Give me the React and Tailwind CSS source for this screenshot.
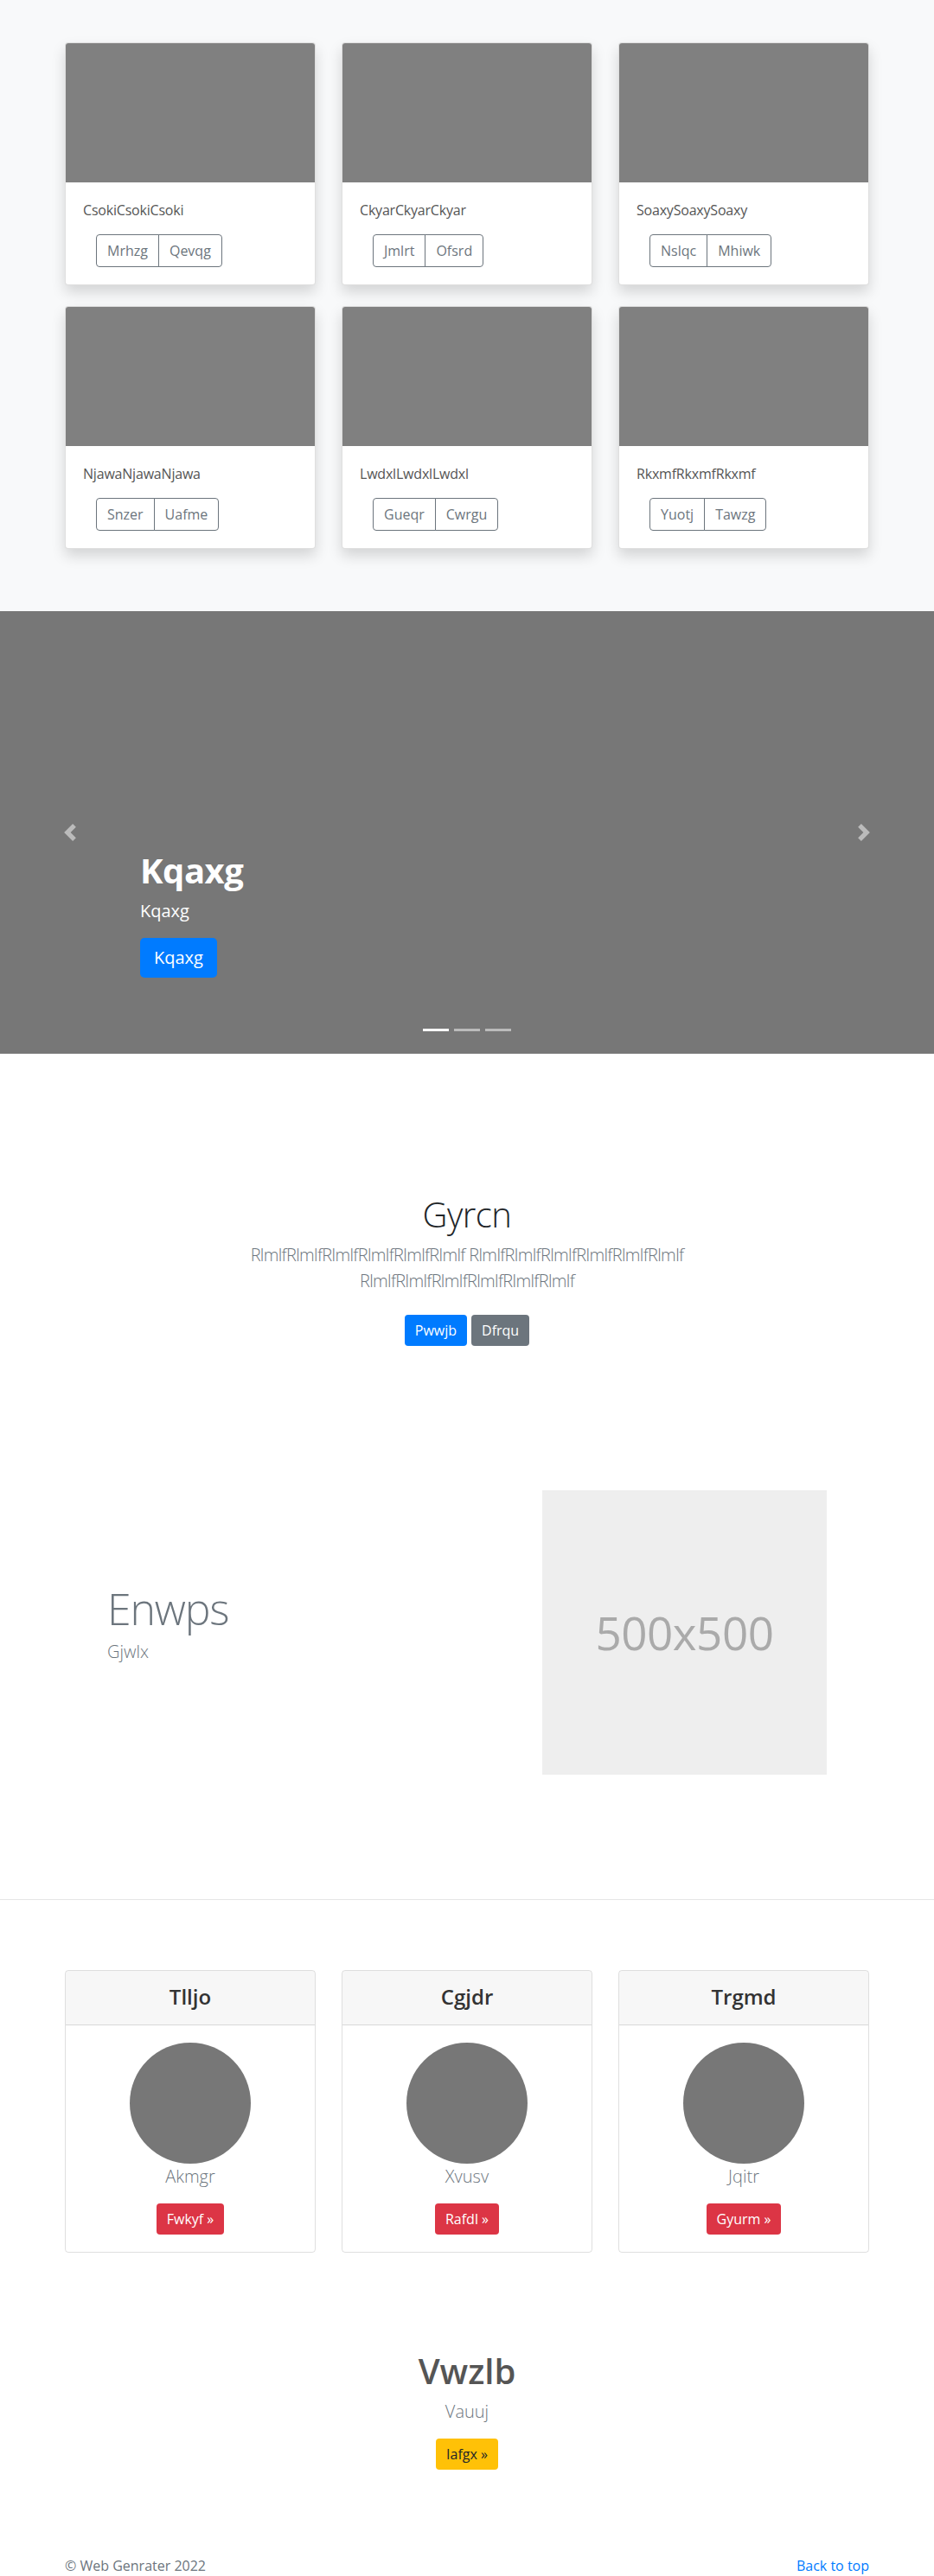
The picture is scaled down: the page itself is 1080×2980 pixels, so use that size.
import React from "react";

const albums = [
  ["CsokiCsokiCsoki", "Mrhzg", "Qevqg"],
  ["CkyarCkyarCkyar", "Jmlrt", "Ofsrd"],
  ["SoaxySoaxySoaxy", "Nslqc", "Mhiwk"],
  ["NjawaNjawaNjawa", "Snzer", "Uafme"],
  ["LwdxlLwdxlLwdxl", "Gueqr", "Cwrgu"],
  ["RkxmfRkxmfRkxmf", "Yuotj", "Tawzg"],
];

const pricing = [
  ["Tlljo", "Akmgr", "Fwkyf »"],
  ["Cgjdr", "Xvusv", "Rafdl »"],
  ["Trgmd", "Jqitr", "Gyurm »"],
];

function AlbumCard({ text, a, b }) {
  return (
    <div className="bg-white border border-black/[.125] rounded-[4px] overflow-hidden shadow-[0_8px_16px_rgba(0,0,0,0.15)]">
      <div className="h-[161px] bg-[#808080]" />
      <div className="p-5">
        <p className="text-base leading-6 mb-4 text-[#555] tracking-[-0.2px]">{text}</p>
        <div className="flex">
          <div className="ml-[15px] inline-flex">
            <span className="px-3 py-1.5 text-base leading-6 text-[#6c757d] border border-[#6c757d] rounded-l-[4px]">
              {a}
            </span>
            <span className="-ml-px px-3 py-1.5 text-base leading-6 text-[#6c757d] border border-[#6c757d] rounded-r-[4px]">
              {b}
            </span>
          </div>
        </div>
      </div>
    </div>
  );
}

export default function App() {
  return (
    <div className="font-['Open_Sans','Noto_Sans',sans-serif] text-[#212529] bg-white">
      {/* Album */}
      <section className="bg-[#f8f9fa] pt-[49px] pb-[72px]">
        <div className="mx-auto w-[960px] px-[15px]">
          <div className="grid grid-cols-3 gap-x-[30px] gap-y-6">
            {albums.map(([t, a, b]) => (
              <AlbumCard key={t} text={t} a={a} b={b} />
            ))}
          </div>
        </div>
      </section>

      {/* Carousel */}
      <section className="relative h-[512px] bg-[#777] overflow-hidden">
        <div className="absolute left-0 top-0 bottom-0 w-[15%] flex items-center justify-center opacity-50">
          <svg width="20" height="20" viewBox="0 0 8 8" fill="#fff">
            <path d="M5.25 0l-4 4 4 4 1.5-1.5L4.25 4l2.5-2.5L5.25 0z" />
          </svg>
        </div>
        <div className="absolute right-0 top-0 bottom-0 w-[15%] flex items-center justify-center opacity-50">
          <svg width="20" height="20" viewBox="0 0 8 8" fill="#fff">
            <path d="M2.75 0l-1.5 1.5L3.75 4l-2.5 2.5L2.75 8l4-4-4-4z" />
          </svg>
        </div>
        <div className="absolute left-[15%] right-[15%] bottom-[52px] py-5 text-white text-left">
          <h1 className="text-[40px] font-bold leading-[1.2] mb-2 tracking-[-0.5px]">Kqaxg</h1>
          <p className="text-xl leading-[30px] mb-4">Kqaxg</p>
          <p className="mb-4">
            <span className="inline-block bg-[#007bff] text-white text-xl leading-[30px] px-4 py-2 rounded-[5px]">
              Kqaxg
            </span>
          </p>
        </div>
        <div className="absolute left-0 right-0 bottom-[26px] flex justify-center">
          <span className="w-[30px] h-[3px] mx-[3px] bg-white" />
          <span className="w-[30px] h-[3px] mx-[3px] bg-white/50" />
          <span className="w-[30px] h-[3px] mx-[3px] bg-white/50" />
        </div>
      </section>

      {/* Jumbotron */}
      <section className="pt-[162px] text-center">
        <h1 className="text-[40px] font-light leading-[1.2] mb-2 text-[#212529] tracking-[-0.5px]">Gyrcn</h1>
        <p className="mx-auto max-w-[610px] text-xl font-light leading-[30px] text-[#6c757d] mb-4 tracking-[-0.65px]">
          RlmlfRlmlfRlmlfRlmlfRlmlfRlmlf RlmlfRlmlfRlmlfRlmlfRlmlfRlmlf RlmlfRlmlfRlmlfRlmlfRlmlfRlmlf
        </p>
        <div className="flex justify-center gap-[5px] pt-2">
          <span className="bg-[#007bff] text-white text-base leading-6 px-3 py-1.5 rounded-[4px]">Pwwjb</span>
          <span className="bg-[#6c757d] text-white text-base leading-6 px-3 py-1.5 rounded-[4px]">Dfrqu</span>
        </div>
      </section>

      {/* Featurette */}
      <section className="pt-[167px] pb-[144px]">
        <div className="flex items-center">
          <div className="w-[627px] pl-[124px]">
            <h2 className="text-[50px] leading-none tracking-[-1.2px] font-light text-[#6c757d] mb-[10px]">Enwps</h2>
            <p className="text-xl font-light leading-[30px] text-[#6c757d] mb-4">Gjwlx</p>
          </div>
          <div className="w-[329px] h-[329px] bg-[#eeeeee] flex items-center justify-center">
            <span className="text-[53px] text-[#aaaaaa] tracking-[-0.5px]">500x500</span>
          </div>
        </div>
      </section>

      <div className="border-t border-black/10" />

      {/* Pricing */}
      <section className="pt-[81px]">
        <div className="mx-auto w-[960px] px-[15px]">
          <div className="grid grid-cols-3 gap-x-[30px]">
            {pricing.map(([h, s, b]) => (
              <div key={h} className="border border-black/[.125] rounded-[4px] overflow-hidden text-center">
                <div className="bg-black/[.03] border-b border-black/[.125] pt-4 pb-[17px]">
                  <h4 className="text-2xl leading-[1.2] font-semibold text-[#333]">{h}</h4>
                </div>
                <div className="p-5">
                  <div className="mx-auto w-[140px] h-[140px] rounded-full bg-[#777]" />
                  <p className="text-xl font-light leading-[30px] text-[#6c757d] mb-4">{s}</p>
                  <span className="inline-block bg-[#dc3545] text-white text-base leading-6 px-3 py-1.5 rounded-[4px]">
                    {b}
                  </span>
                </div>
              </div>
            ))}
          </div>
        </div>
      </section>

      {/* CTA */}
      <section className="pt-[113px] text-center">
        <h1 className="text-[40px] font-semibold leading-[1.2] mb-2 text-[#555]">Vwzlb</h1>
        <p className="text-xl font-light leading-[30px] text-[#6c757d] mb-4">Vauuj</p>
        <span className="inline-block bg-[#ffc107] text-[#212529] text-base leading-6 px-3 py-1.5 rounded-[4px]">
          Iafgx »
        </span>
      </section>

      {/* Footer */}
      <footer className="pt-[99px] pb-px">
        <div className="mx-auto w-[960px] px-[15px] flex justify-between text-base leading-6">
          <p className="text-[#6c757d]">© Web Genrater 2022</p>
          <a className="text-[#007bff]" href="#">Back to top</a>
        </div>
      </footer>
    </div>
  );
}
